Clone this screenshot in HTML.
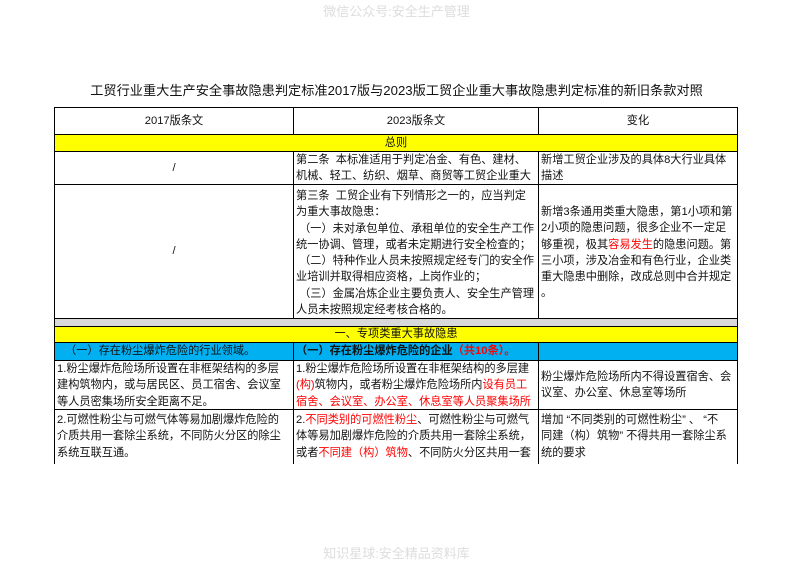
<!DOCTYPE html>
<html><head><meta charset="utf-8"><style>
body{margin:0;width:793px;height:561px;background:#fff;position:relative;overflow:hidden;font-family:"Liberation Sans","Noto Sans CJK SC",sans-serif;color:#111}
.a{position:absolute;box-sizing:border-box}
.c{position:absolute;box-sizing:border-box;border:1px solid #000;font-size:11.2px;line-height:16.3px;white-space:nowrap;overflow:hidden;padding-left:2px}
.ctr{text-align:center;padding-left:0}
.r{color:#f00}
</style></head><body>
<div class="a" style="left:0;top:1px;width:793px;text-align:center;font-size:13px;color:#ddd">微信公众号:安全生产管理</div>
<div class="a" style="left:0;top:80px;width:793px;text-align:center;font-size:13.2px;color:#111">工贸行业重大生产安全事故隐患判定标准2017版与2023版工贸企业重大事故隐患判定标准的新旧条款对照</div>
<div class="a" style="left:0;top:543px;width:793px;text-align:center;font-size:13px;color:#ddd">知识星球:安全精品资料库</div>

<div class="c ctr" style="left:54px;top:107px;width:240px;height:28px;line-height:26px">2017版条文</div>
<div class="c ctr" style="left:293px;top:107px;width:246px;height:28px;line-height:26px">2023版条文</div>
<div class="c ctr" style="left:538px;top:107px;width:200px;height:28px;line-height:26px">变化</div>
<div class="c ctr" style="left:54px;top:134px;width:684px;height:18px;line-height:16px;background:#ff0">总则</div>
<div class="c ctr" style="left:54px;top:151px;width:240px;height:34px;line-height:32px">/</div>
<div class="c" style="left:293px;top:151px;width:246px;height:34px">第二条&nbsp; 本标准适用于判定冶金、有色、建材、<br>机械、轻工、纺织、烟草、商贸等工贸企业重大</div>
<div class="c" style="left:538px;top:151px;width:200px;height:34px">新增工贸企业涉及的具体8大行业具体<br>描述</div>
<div class="c ctr" style="left:54px;top:184px;width:240px;height:135px;line-height:133px">/</div>
<div class="c" style="left:293px;top:184px;width:246px;height:135px;padding-top:3px">第三条&nbsp; 工贸企业有下列情形之一的，应当判定<br>为重大事故隐患：<br>&nbsp;（一）未对承包单位、承租单位的安全生产工作<br>统一协调、管理，或者未定期进行安全检查的；<br>&nbsp;（二）特种作业人员未按照规定经专门的安全作<br>业培训并取得相应资格，上岗作业的；<br>&nbsp;（三）金属冶炼企业主要负责人、安全生产管理<br>人员未按照规定经考核合格的。</div>
<div class="c" style="left:538px;top:184px;width:200px;height:135px;padding-top:19px">新增3条通用类重大隐患，第1小项和第<br>2小项的隐患问题，很多企业不一定足<br>够重视，极其<span class="r">容易发生</span>的隐患问题。第<br>三小项，涉及冶金和有色行业，企业类<br>重大隐患中删除，改成总则中合并规定<br>。</div>
<div class="c" style="left:54px;top:318px;width:684px;height:9px;background:#d9d9d9"></div>
<div class="c ctr" style="left:54px;top:326px;width:684px;height:17px;line-height:15px;background:#ff0">一、专项类重大事故隐患</div>
<div class="c" style="left:54px;top:342px;width:240px;height:19px;line-height:17px;background:#00b0f0;padding-left:10px">（一）存在粉尘爆炸危险的行业领域。</div>
<div class="c" style="left:293px;top:342px;width:246px;height:19px;line-height:17px;background:#00b0f0;font-weight:bold">（一）存在粉尘爆炸危险的企业<span class="r">（共10条）。</span></div>
<div class="c" style="left:538px;top:342px;width:200px;height:19px;background:#00b0f0"></div>
<div class="c" style="left:54px;top:360px;width:240px;height:50px">1.粉尘爆炸危险场所设置在非框架结构的多层<br>建构筑物内，或与居民区、员工宿舍、会议室<br>等人员密集场所安全距离不足。</div>
<div class="c" style="left:293px;top:360px;width:246px;height:50px">1.粉尘爆炸危险场所设置在非框架结构的多层建<br><span class="r">(构)</span>筑物内，或者粉尘爆炸危险场所内<span class="r">设有员工</span><br><span class="r">宿舍、会议室、办公室、休息室等人员聚集场所</span></div>
<div class="c" style="left:538px;top:360px;width:200px;height:50px;padding-top:8px">粉尘爆炸危险场所内不得设置宿舍、会<br>议室、办公室、休息室等场所</div>
<div class="c" style="left:54px;top:409px;width:240px;height:55px;border-bottom:none;padding-top:2px">2.可燃性粉尘与可燃气体等易加剧爆炸危险的<br>介质共用一套除尘系统，不同防火分区的除尘<br>系统互联互通。</div>
<div class="c" style="left:293px;top:409px;width:246px;height:55px;border-bottom:none;padding-top:2px">2.<span class="r">不同类别的可燃性粉尘</span>、可燃性粉尘与可燃气<br>体等易加剧爆炸危险的介质共用一套除尘系统，<br>或者<span class="r">不同建（构）筑物</span>、不同防火分区共用一套</div>
<div class="c" style="left:538px;top:409px;width:200px;height:55px;border-bottom:none;padding-top:2px">增加 “不同类别的可燃性粉尘” 、 “不<br>同建（构）筑物” 不得共用一套除尘系<br>统的要求</div>
</body></html>
